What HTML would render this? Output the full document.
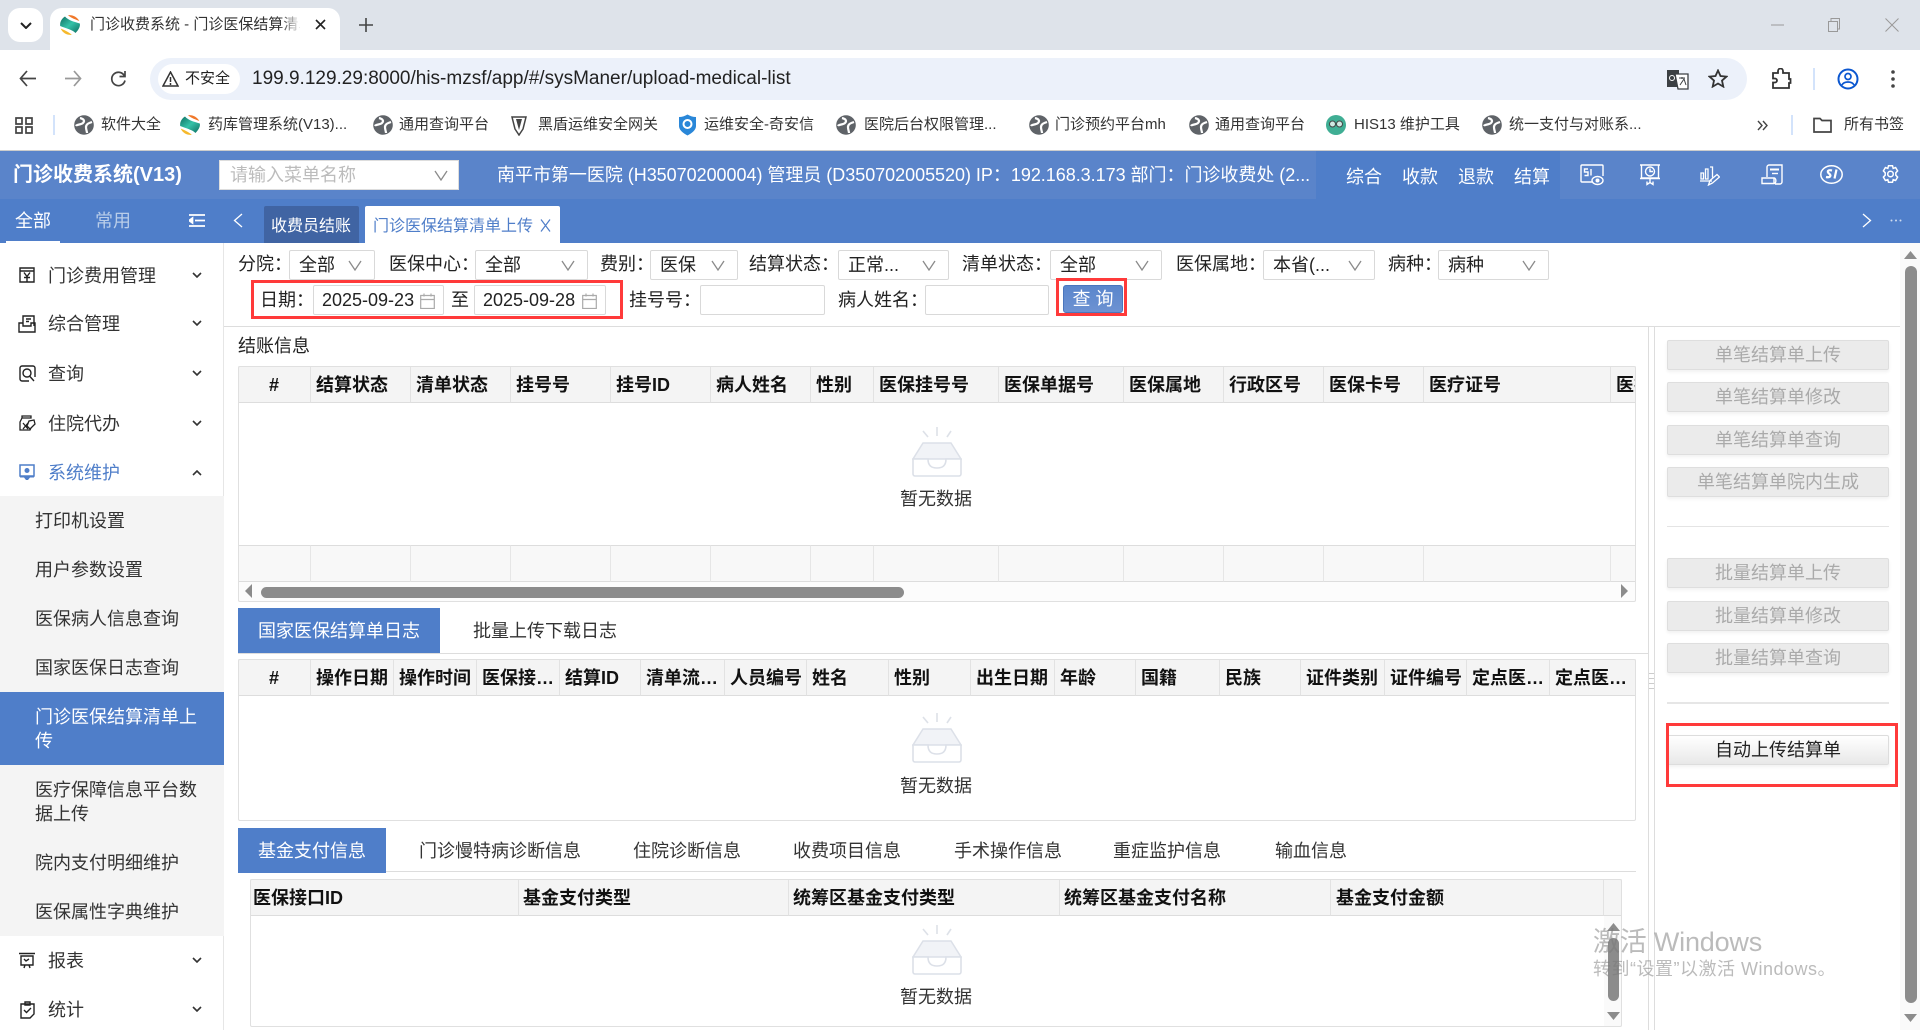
<!DOCTYPE html>
<html lang="zh-CN"><head><meta charset="utf-8"><title>门诊收费系统</title>
<style>
*{box-sizing:border-box}
html,body{margin:0;padding:0;width:1920px;height:1030px;overflow:hidden;background:#fff;font-family:"Liberation Sans","Noto Sans CJK SC",sans-serif;color:#222}
.a{position:absolute}
.t{position:absolute;white-space:nowrap;line-height:24px;height:24px;font-size:18px}
.bm{font-size:15px;color:#333}
.w{color:#fff}
.sel,.inp{position:absolute;height:30px;background:#fff;border:1px solid #d9d9d9;border-radius:2px;font-size:18px;line-height:28px;padding-left:9px;color:#222;white-space:nowrap}
.inp{padding-left:8px}
.sel svg{position:absolute;right:12px;top:9px}
.cal{position:absolute;top:7px}
.tb{position:absolute;overflow:hidden}
.th{position:absolute;top:0;height:37px;background:#f4f4f4;border-right:1px solid #e2e2e2;border-bottom:1px solid #ddd;font-weight:bold;font-size:18px;line-height:39px;padding-left:5px;color:#111;white-space:nowrap;overflow:hidden}
.tf{position:absolute;top:179px;height:37px;background:#f8f8f8;border-right:1px solid #e6e6e6;border-bottom:1px solid #ddd;border-top:1px solid #ddd}
.bd{position:absolute;left:0;top:0;right:0;bottom:0;border:1px solid #e0e0e0;border-radius:2px}
.btn{position:absolute;left:1667px;width:222px;height:30px;background:#ebebeb;border:1px solid #dedede;border-radius:2px;box-shadow:0 2px 3px rgba(0,0,0,.06);font-size:18px;line-height:28px;text-align:center;color:#aaa}
.empty{position:absolute;left:912px}
.et{position:absolute;left:900px;font-size:18px;line-height:24px;color:#333;white-space:nowrap}
.side{position:absolute;left:48px;font-size:18px;line-height:24px;color:#333;white-space:nowrap}
.sub{position:absolute;left:35px;font-size:18px;line-height:24px;color:#333;white-space:nowrap}
</style></head><body>
<svg width="0" height="0" style="position:absolute"><defs>
<linearGradient id="tl" x1="0" y1="0" x2="1" y2="1"><stop offset="0" stop-color="#0f6f62"/><stop offset=".5" stop-color="#35c2a8"/><stop offset="1" stop-color="#0f6f62"/></linearGradient>
<symbol id="emp" viewBox="0 0 50 50"><path d="M25 0v9M11 4l5 6M39 4l-4 6" stroke="#dde1e8" stroke-width="1.6" fill="none"/><path d="M11 16h28l10 16H1z" fill="#f1f3f7" stroke="#dce0e8" stroke-width="1.5"/><path d="M1 32h15c0 8 5 9 9 9s9-1 9-9h15v15a2 2 0 0 1-2 2H3a2 2 0 0 1-2-2z" fill="#fff" stroke="#dce0e8" stroke-width="1.6"/></symbol>
<symbol id="globe" viewBox="0 0 20 20"><circle cx="10" cy="10" r="9.800" fill="#5f6368"/><path d="M6 3c4 1 5 3 3 5s-6 1-7 3M18 7c-3 1-6 2-6 5s1 4 1 6" fill="none" stroke="#fff" stroke-width="2.200"/></symbol>
<symbol id="logo" viewBox="0 0 20 20"><path d="M8 .2C12-.5 17 1.500 19.300 6 16 4.500 12 3.500 8 .2z" fill="#f0782a"/><path d="M.7 13.500C4 15 8 16.500 11.800 19.800 7.500 20.500 2.500 18 .7 13.500z" fill="#f6b92c"/><path d="M5 1.500C8 5 13 6.500 19.800 8.500 20.500 11.500 18.500 15 15.500 18 12 14.500 6 13.500.2 11-.3 7.500 1.500 3.500 5 1.500z" fill="url(#tl)"/></symbol>
<symbol id="chv" viewBox="0 0 14 11"><path d="M1 1l6 9 6-9" fill="none" stroke="#8a8a8a" stroke-width="1.3"/></symbol>
<symbol id="chs" viewBox="0 0 10 6"><path d="M1 1l4 4 4-4" fill="none" stroke="#333" stroke-width="1.6"/></symbol>
<symbol id="calc" viewBox="0 0 15 16"><path d="M.7 2.500h13.600v13H.7zM.7 6.500h13.600M4 .5v3M11 .5v3" fill="none" stroke="#aaa" stroke-width="1.2"/></symbol>
</defs></svg>

<!-- browser tab bar -->
<div class="a" style="left:0;top:0;width:1920px;height:50px;background:#dee3ea"></div>
<div class="a" style="left:8px;top:8px;width:35px;height:34px;background:#fff;border-radius:12px"></div>
<svg class="a" style="left:20px;top:22px" width="12" height="7" viewBox="0 0 12 7"><path d="M1 1l5 5 5-5" fill="none" stroke="#222" stroke-width="2"/></svg>
<div class="a" style="left:50px;top:8px;width:290px;height:42px;background:#fff;border-radius:12px 12px 0 0"></div>
<svg class="a" style="left:60px;top:15px" width="20" height="20"><use href="#logo"/></svg>
<div class="t" style="left:90px;top:13px;font-size:15px;width:210px;overflow:hidden;color:#333">门诊收费系统 - 门诊医保结算清单</div>
<div class="a" style="left:280px;top:13px;width:22px;height:24px;background:linear-gradient(90deg,rgba(255,255,255,0),#fff)"></div>
<svg class="a" style="left:315px;top:19px" width="11" height="11" viewBox="0 0 11 11"><path d="M1 1l9 9M10 1l-9 9" stroke="#222" stroke-width="1.6"/></svg>
<svg class="a" style="left:359px;top:18px" width="14" height="14" viewBox="0 0 14 14"><path d="M7 0v14M0 7h14" stroke="#444" stroke-width="1.6"/></svg>
<svg class="a" style="left:1771px;top:24px" width="13" height="2"><path d="M0 1h13" stroke="#999"/></svg>
<svg class="a" style="left:1827px;top:18px" width="14" height="14" viewBox="0 0 14 14"><path d="M1.500 3.500h9v10h-9zM4 3V.5h8.500V11H11" fill="none" stroke="#999"/></svg>
<svg class="a" style="left:1885px;top:18px" width="14" height="14" viewBox="0 0 14 14"><path d="M.5.5l13 13M13.500.5l-13 13" stroke="#999"/></svg>

<!-- toolbar -->
<div class="a" style="left:0;top:50px;width:1920px;height:101px;background:#fff;border-radius:10px 10px 0 0;border-bottom:1px solid #ccc"></div>
<svg class="a" style="left:19px;top:70px" width="18" height="17" viewBox="0 0 18 17"><path d="M8 1L1.500 8.500 8 16M2 8.500h15" fill="none" stroke="#444" stroke-width="1.700"/></svg>
<svg class="a" style="left:64px;top:70px" width="18" height="17" viewBox="0 0 18 17"><path d="M10 1l6.500 7.500L10 16M16 8.500H1" fill="none" stroke="#999" stroke-width="1.700"/></svg>
<svg class="a" style="left:110px;top:70px" width="17" height="17" viewBox="0 0 17 17"><path d="M14.500 6A6.700 6.700 0 1 0 15 10.500M15 1v5.500H9.500" fill="none" stroke="#444" stroke-width="1.700"/></svg>
<div class="a" style="left:150px;top:58px;width:1597px;height:42px;background:#ecf1fa;border-radius:21px"></div>
<div class="a" style="left:158px;top:64px;width:82px;height:30px;background:#fff;border-radius:15px"></div>
<svg class="a" style="left:162px;top:71px" width="17" height="16" viewBox="0 0 17 16"><path d="M8.500 1L16 15H1zM8.500 6v5M8.500 12v2" fill="none" stroke="#333" stroke-width="1.500"/></svg>
<div class="t" style="left:185px;top:67px;font-size:15px;color:#222">不安全</div>
<div class="t" style="left:252px;top:67px;font-size:19px;color:#222">199.9.129.29:8000/his-mzsf/app/#/sysManer/upload-medical-list</div>
<svg class="a" style="left:1666px;top:69px" width="23" height="21" viewBox="0 0 23 21"><path d="M1 1h12v17H1z" fill="#3c4043"/><path d="M9 5h13v15H12z" fill="#fff" stroke="#3c4043" stroke-width="1.300"/><path d="M13 9h6M16 8v2M14 16l4-6 2 6" fill="none" stroke="#3c4043"/><circle cx="6" cy="9" r="2.500" fill="none" stroke="#fff"/></svg>
<svg class="a" style="left:1708px;top:69px" width="20" height="19" viewBox="0 0 20 19"><path d="M10 1.500l2.500 5.500 6 .6-4.500 4 1.300 6L10 14.500 4.700 17.600l1.300-6-4.500-4 6-.6z" fill="none" stroke="#333" stroke-width="1.800"/></svg>
<svg class="a" style="left:1771px;top:68px" width="21" height="21" viewBox="0 0 21 21"><path d="M2 5h5V3a2.500 2.500 0 0 1 5 0v2h6v6h1.500v4H18v5H2v-5.500h2a2 2 0 0 0 0-4H2z" fill="none" stroke="#333" stroke-width="1.800"/></svg>
<div class="a" style="left:1813px;top:68px;width:2px;height:22px;background:#d3e3fb"></div>
<svg class="a" style="left:1837px;top:68px" width="22" height="22" viewBox="0 0 22 22"><circle cx="11" cy="11" r="9.500" fill="none" stroke="#0b57d0" stroke-width="2"/><circle cx="11" cy="8.500" r="3" fill="none" stroke="#0b57d0" stroke-width="1.700"/><path d="M5 17c2-4 10-4 12 0" fill="none" stroke="#0b57d0" stroke-width="1.700"/></svg>
<svg class="a" style="left:1891px;top:70px" width="4" height="18"><circle cx="2" cy="2" r="1.800" fill="#444"/><circle cx="2" cy="9" r="1.800" fill="#444"/><circle cx="2" cy="16" r="1.800" fill="#444"/></svg>

<!-- bookmarks -->
<svg class="a" style="left:15px;top:117px" width="19" height="17" viewBox="0 0 19 17"><path d="M1 1h6v6H1zM11 1h6v6h-6zM1 10h6v6H1zM11 10h6v6h-6z" fill="none" stroke="#444" stroke-width="1.700"/></svg>
<div class="a" style="left:53px;top:115px;width:2px;height:20px;background:#d3e3fb"></div>
<svg class="a" style="left:74px;top:115px" width="20" height="20"><use href="#globe"/></svg><div class="t bm" style="left:101px;top:113px">软件大全</div>
<svg class="a" style="left:180px;top:115px" width="20" height="20"><use href="#logo"/></svg><div class="t bm" style="left:208px;top:113px">药库管理系统(V13)...</div>
<svg class="a" style="left:373px;top:115px" width="20" height="20"><use href="#globe"/></svg><div class="t bm" style="left:399px;top:113px">通用查询平台</div>
<svg class="a" style="left:511px;top:115px" width="16" height="21" viewBox="0 0 16 21"><path d="M1 2h14l-3 12-4 6-4-6z" fill="none" stroke="#444" stroke-width="1.500"/><path d="M5 4l3 11 3-11z" fill="#444"/></svg><div class="t bm" style="left:538px;top:113px">黑盾运维安全网关</div>
<svg class="a" style="left:678px;top:114px" width="19" height="22" viewBox="0 0 19 22"><path d="M1 3c3 0 6-1 8.500-2.500C12 2 15 3 18 3v9c0 4-4 7-8.500 9.500C5 19 1 16 1 12z" fill="#2a87d8"/><circle cx="9.500" cy="10" r="4" fill="none" stroke="#fff" stroke-width="2"/></svg><div class="t bm" style="left:704px;top:113px">运维安全-奇安信</div>
<svg class="a" style="left:836px;top:115px" width="20" height="20"><use href="#globe"/></svg><div class="t bm" style="left:864px;top:113px">医院后台权限管理...</div>
<svg class="a" style="left:1029px;top:115px" width="20" height="20"><use href="#globe"/></svg><div class="t bm" style="left:1055px;top:113px">门诊预约平台mh</div>
<svg class="a" style="left:1189px;top:115px" width="20" height="20"><use href="#globe"/></svg><div class="t bm" style="left:1215px;top:113px">通用查询平台</div>
<svg class="a" style="left:1326px;top:115px" width="20" height="20" viewBox="0 0 20 20"><circle cx="10" cy="10" r="10" fill="#3fae94"/><circle cx="6.500" cy="9" r="3" fill="#cfe9e2" stroke="#444"/><circle cx="13.500" cy="9" r="3" fill="#cfe9e2" stroke="#444"/></svg><div class="t bm" style="left:1354px;top:113px">HIS13 维护工具</div>
<svg class="a" style="left:1482px;top:115px" width="20" height="20"><use href="#globe"/></svg><div class="t bm" style="left:1509px;top:113px">统一支付与对账系...</div>
<svg class="a" style="left:1757px;top:120px" width="11" height="11" viewBox="0 0 11 11"><path d="M1 1l4 4.500L1 10M6 1l4 4.500L6 10" fill="none" stroke="#444" stroke-width="1.400"/></svg>
<div class="a" style="left:1791px;top:115px;width:2px;height:20px;background:#d3e3fb"></div>
<svg class="a" style="left:1813px;top:117px" width="19" height="16" viewBox="0 0 19 16"><path d="M1 1.500h6l2 2h9v11.500H1z" fill="none" stroke="#444" stroke-width="1.700"/></svg>
<div class="t bm" style="left:1844px;top:113px">所有书签</div>

<!-- app header -->
<div class="a" style="left:0;top:151px;width:1920px;height:48px;background:#5a84ca"></div>
<div class="a" style="left:1316px;top:151px;width:244px;height:48px;background:#4f7ec9"></div>
<div class="a" style="left:0;top:199px;width:1920px;height:44px;background:#4f7ec9"></div>
<div class="t w" style="left:13px;top:163px;font-size:20px;font-weight:bold">门诊收费系统(V13)</div>
<div class="a" style="left:219px;top:160px;width:240px;height:30px;background:#fff;border:1px solid #ddd"></div>
<div class="t" style="left:230px;top:163px;color:#bcbcbc">请输入菜单名称</div>
<svg class="a" style="left:434px;top:170px" width="14" height="11"><use href="#chv"/></svg>
<div class="t w" style="left:497px;top:163px;width:816px;overflow:hidden;font-size:18px;letter-spacing:-.03px">南平市第一医院 (H35070200004) 管理员 (D350702005520) IP：192.168.3.173 部门：门诊收费处 (2...</div>
<div class="t w" style="left:1346px;top:165px">综合</div>
<div class="t w" style="left:1402px;top:165px">收款</div>
<div class="t w" style="left:1458px;top:165px">退款</div>
<div class="t w" style="left:1514px;top:165px">结算</div>
<!-- header icons -->
<svg class="a" style="left:1580px;top:164px" width="26" height="22" viewBox="0 0 26 22" fill="none" stroke="#fff" stroke-width="1.400"><path d="M12 18H2a1 1 0 0 1-1-1V2a1 1 0 0 1 1-1h20a1 1 0 0 1 1 1v10"/><path d="M8 5H4.500v3H8v3.500H4.500M11 5v6.500"/><ellipse cx="17.500" cy="16.500" rx="5.500" ry="4"/><circle cx="17.500" cy="16.500" r="1.300" fill="#fff"/></svg>
<svg class="a" style="left:1640px;top:164px" width="20" height="22" viewBox="0 0 20 22" fill="none" stroke="#fff" stroke-width="1.400"><path d="M0 1h20M1.500 1v13h17V1M0 14.500h20M10 15v3M7 17.500v3l3-2 3 2v-3"/><circle cx="10" cy="7.500" r="4.500"/><path d="M10 4.500v3h3"/></svg>
<svg class="a" style="left:1700px;top:166px" width="20" height="20" viewBox="0 0 20 20" fill="none" stroke="#fff" stroke-width="1.300"><path d="M1 7h2.500v6H1zM5.500 3h2.500v10H5.500zM10 1h2.500v10.500M0 15h12M8.500 19l1.500-4.500 7-6 2.500 2.500-7 6z"/></svg>
<svg class="a" style="left:1761px;top:164px" width="22" height="21" viewBox="0 0 22 21" fill="none" stroke="#fff" stroke-width="1.400"><path d="M6 13V3c0-1 1-2 2-2h13v17c0 1-1 2-2 2h-5M1 14h12v5.500H1zM13 19.500c2.500 0 2.500-5.500 0-5.500"/><path d="M9 5.500h9" stroke-width="2"/><path d="M11 9.500h6"/></svg>
<svg class="a" style="left:1820px;top:165px" width="23" height="19" viewBox="0 0 23 19" fill="none" stroke="#fff"><ellipse cx="11.500" cy="9.500" rx="10.700" ry="8.700" stroke-width="1.500"/><path d="M12 5.500c-4-1-5.500 1-3 3s1.500 4.500-3 3.500M16.500 4.500l-2 9" stroke-width="2.200"/></svg>
<svg class="a" style="left:1881px;top:165px" width="19" height="18" viewBox="0 0 19 18" fill="none" stroke="#fff" stroke-width="1.500"><path d="M7.500.8h4l.7 2.600 2.400-.9 2 3.400-1.800 1.900v2.400l1.800 1.900-2 3.400-2.400-.9-.7 2.600h-4l-.7-2.600-2.400.9-2-3.400 1.800-1.900V7.800L2.400 5.900l2-3.400 2.400.9z"/><circle cx="9.500" cy="9" r="2.800"/></svg>

<div class="t w" style="left:15px;top:209px">全部</div>
<div class="t" style="left:95px;top:209px;color:#b9cde9">常用</div>
<div class="a" style="left:6px;top:241px;width:54px;height:2px;background:#fff"></div>
<svg class="a" style="left:189px;top:214px" width="16" height="13" viewBox="0 0 16 13"><path d="M0 1h16M6 6.500h10M0 12h16M0 6.500l3.500-2.500v5z" stroke="#fff" stroke-width="1.700" fill="#fff"/></svg>
<svg class="a" style="left:233px;top:213px" width="10" height="15" viewBox="0 0 10 15"><path d="M9 1L1.500 7.500 9 14" fill="none" stroke="#fff" stroke-width="1.300"/></svg>
<div class="a" style="left:264px;top:206px;width:95px;height:37px;background:#4064a3;border-radius:2px 2px 0 0"></div>
<div class="t w" style="left:271px;top:215px;font-size:16px">收费员结账</div>
<div class="a" style="left:365px;top:206px;width:195px;height:37px;background:#fff;border-radius:2px 2px 0 0"></div>
<div class="t" style="left:373px;top:215px;font-size:16px;color:#4f7ec9">门诊医保结算清单上传</div>
<svg class="a" style="left:540px;top:219px" width="11" height="13" viewBox="0 0 11 13"><path d="M1 .5l9 12M10 .5l-9 12" stroke="#4f7ec9" stroke-width="1.200"/></svg>
<svg class="a" style="left:1862px;top:213px" width="10" height="15" viewBox="0 0 10 15"><path d="M1 1l7.500 6.500L1 14" fill="none" stroke="#fff" stroke-width="1.300"/></svg>
<svg class="a" style="left:1890px;top:219px" width="12" height="3"><circle cx="1.500" cy="1.500" r="1" fill="#cfdcf0"/><circle cx="6" cy="1.500" r="1" fill="#cfdcf0"/><circle cx="10.500" cy="1.500" r="1" fill="#cfdcf0"/></svg>

<!-- sidebar -->
<div class="a" style="left:0;top:243px;width:224px;height:787px;background:#fff;border-right:1px solid #e6e6e6"></div>
<div class="a" style="left:0;top:496px;width:224px;height:440px;background:#f4f4f4"></div>
<div class="a" style="left:0;top:692px;width:224px;height:73px;background:#4f7ec9"></div>

<svg class="a" style="left:19px;top:267px" width="16" height="16" viewBox="0 0 16 16" fill="none" stroke="#222" stroke-width="1.400"><path d="M1 1h14v14H1zM1 4h14M5 5.500l3 4 3-4M8 9.500v5M5 10.500h6"/></svg>
<div class="side" style="top:264px">门诊费用管理</div>
<svg class="a" style="left:192px;top:272px" width="10" height="6"><use href="#chs"/></svg>
<svg class="a" style="left:18px;top:315px" width="18" height="18" viewBox="0 0 18 18" fill="none" stroke="#222" stroke-width="1.400"><path d="M5 9V1h11v10M1 8h4v3h8V8h4v9H1zM8 4h5M8 6.500h3"/></svg>
<div class="side" style="top:312px">综合管理</div>
<svg class="a" style="left:192px;top:320px" width="10" height="6"><use href="#chs"/></svg>
<svg class="a" style="left:19px;top:365px" width="17" height="17" viewBox="0 0 17 17" fill="none" stroke="#222" stroke-width="1.400"><path d="M10 16H3a2 2 0 0 1-2-2V3a2 2 0 0 1 2-2h11a2 2 0 0 1 2 2v9"/><circle cx="8" cy="8" r="4"/><path d="M10.500 11l4.500 5"/></svg>
<div class="side" style="top:362px">查询</div>
<svg class="a" style="left:192px;top:370px" width="10" height="6"><use href="#chs"/></svg>
<svg class="a" style="left:19px;top:415px" width="17" height="16" viewBox="0 0 17 16" fill="none" stroke="#222" stroke-width="1.300"><path d="M3 1h9v2H3zM3 3L1 7v8h10l1-2M10 6l5-1 1 4-5 5-3-3zM4 8l5 6M9 8l-5 6"/></svg>
<div class="side" style="top:412px">住院代办</div>
<svg class="a" style="left:192px;top:420px" width="10" height="6"><use href="#chs"/></svg>
<svg class="a" style="left:19px;top:464px" width="16" height="17" viewBox="0 0 16 17"><path d="M1 1h14v11H1z" fill="none" stroke="#4f7ec9" stroke-width="1.500"/><circle cx="8" cy="6.500" r="2.500" fill="#4f7ec9"/><path d="M1 12h14v1.500H1zM5 13.500h6L9 16H7z" fill="#4f7ec9"/></svg>
<div class="side" style="top:461px;color:#4f7ec9">系统维护</div>
<svg class="a" style="left:192px;top:470px;transform:rotate(180deg)" width="10" height="6"><use href="#chs"/></svg>
<div class="sub" style="top:509px">打印机设置</div>
<div class="sub" style="top:558px">用户参数设置</div>
<div class="sub" style="top:607px">医保病人信息查询</div>
<div class="sub" style="top:656px">国家医保日志查询</div>
<div class="sub" style="top:705px;color:#fff">门诊医保结算清单上</div>
<div class="sub" style="top:729px;color:#fff">传</div>
<div class="sub" style="top:778px">医疗保障信息平台数</div>
<div class="sub" style="top:802px">据上传</div>
<div class="sub" style="top:851px">院内支付明细维护</div>
<div class="sub" style="top:900px">医保属性字典维护</div>
<svg class="a" style="left:19px;top:952px" width="16" height="17" viewBox="0 0 16 17" fill="none" stroke="#222" stroke-width="1.400"><path d="M0 1.500h16M2 4h12v9H2zM5 16l1-3M11 16l-1-3M5 7l2 2 3-2"/></svg>
<div class="side" style="top:949px">报表</div>
<svg class="a" style="left:192px;top:957px" width="10" height="6"><use href="#chs"/></svg>
<svg class="a" style="left:20px;top:1001px" width="15" height="18" viewBox="0 0 15 18" fill="none" stroke="#222" stroke-width="1.400"><path d="M1 3h13v10l-4 4H1zM5 1h5v3H5zM4 9l2.500 2.500L11 7"/></svg>
<div class="side" style="top:998px">统计</div>
<svg class="a" style="left:192px;top:1006px" width="10" height="6"><use href="#chs"/></svg>

<!-- filters row 1 -->
<div class="t" style="left:238px;top:252px">分院：</div>
<div class="sel" style="left:289px;top:250px;width:86px">全部<svg width="14" height="11"><use href="#chv"/></svg></div>
<div class="t" style="left:389px;top:252px">医保中心：</div>
<div class="sel" style="left:475px;top:250px;width:113px">全部<svg width="14" height="11"><use href="#chv"/></svg></div>
<div class="t" style="left:600px;top:252px">费别：</div>
<div class="sel" style="left:650px;top:250px;width:88px">医保<svg width="14" height="11"><use href="#chv"/></svg></div>
<div class="t" style="left:749px;top:252px">结算状态：</div>
<div class="sel" style="left:838px;top:250px;width:111px">正常...<svg width="14" height="11"><use href="#chv"/></svg></div>
<div class="t" style="left:962px;top:252px">清单状态：</div>
<div class="sel" style="left:1050px;top:250px;width:112px">全部<svg width="14" height="11"><use href="#chv"/></svg></div>
<div class="t" style="left:1176px;top:252px">医保属地：</div>
<div class="sel" style="left:1263px;top:250px;width:112px">本省(...<svg width="14" height="11"><use href="#chv"/></svg></div>
<div class="t" style="left:1388px;top:252px">病种：</div>
<div class="sel" style="left:1438px;top:250px;width:111px">病种<svg width="14" height="11"><use href="#chv"/></svg></div>

<!-- filters row 2 -->
<div class="a" style="left:251px;top:280px;width:372px;height:39px;border:3px solid #ff3a3a"></div>
<div class="t" style="left:260px;top:288px">日期：</div>
<div class="inp" style="left:313px;top:285px;width:131px">2025-09-23<svg class="cal" style="left:106px" width="15" height="16"><use href="#calc"/></svg></div>
<div class="t" style="left:451px;top:288px">至</div>
<div class="inp" style="left:474px;top:285px;width:132px">2025-09-28<svg class="cal" style="left:107px" width="15" height="16"><use href="#calc"/></svg></div>
<div class="t" style="left:629px;top:288px">挂号号：</div>
<div class="inp" style="left:700px;top:285px;width:125px"></div>
<div class="t" style="left:838px;top:288px">病人姓名：</div>
<div class="inp" style="left:925px;top:285px;width:124px"></div>
<div class="a" style="left:1056px;top:278px;width:71px;height:38px;border:3px solid #ff3a3a"></div>
<div class="a" style="left:1063px;top:285px;width:60px;height:28px;background:linear-gradient(#5a86cc,#6d92d2);border:1px solid #4a76bd;border-radius:3px;color:#fff;font-size:18px;line-height:26px;text-align:center">查 询</div>
<div class="a" style="left:224px;top:326px;width:1676px;height:1px;background:#ddd"></div>

<!-- section 1 -->
<div class="t" style="left:238px;top:334px">结账信息</div>
<div class="tb" style="left:238px;top:366px;width:1398px;height:236px;background:#fff">
<div class="th" style="left:0;width:73px;text-align:center;padding:0">#</div>
<div class="th" style="left:73px;width:100px">结算状态</div>
<div class="th" style="left:173px;width:100px">清单状态</div>
<div class="th" style="left:273px;width:100px">挂号号</div>
<div class="th" style="left:373px;width:100px">挂号ID</div>
<div class="th" style="left:473px;width:100px">病人姓名</div>
<div class="th" style="left:573px;width:63px">性别</div>
<div class="th" style="left:636px;width:125px">医保挂号号</div>
<div class="th" style="left:761px;width:125px">医保单据号</div>
<div class="th" style="left:886px;width:100px">医保属地</div>
<div class="th" style="left:986px;width:100px">行政区号</div>
<div class="th" style="left:1086px;width:100px">医保卡号</div>
<div class="th" style="left:1186px;width:187px">医疗证号</div>
<div class="th" style="left:1373px;width:25px;border-right:0">医疗</div>
<div class="tf" style="left:0;width:73px"></div><div class="tf" style="left:73px;width:100px"></div><div class="tf" style="left:173px;width:100px"></div><div class="tf" style="left:273px;width:100px"></div><div class="tf" style="left:373px;width:100px"></div><div class="tf" style="left:473px;width:100px"></div><div class="tf" style="left:573px;width:63px"></div><div class="tf" style="left:636px;width:125px"></div><div class="tf" style="left:761px;width:125px"></div><div class="tf" style="left:886px;width:100px"></div><div class="tf" style="left:986px;width:100px"></div><div class="tf" style="left:1086px;width:100px"></div><div class="tf" style="left:1186px;width:187px"></div><div class="tf" style="left:1373px;width:25px;border-right:0"></div>
<div class="a" style="left:0;top:216px;width:1398px;height:20px;background:#fcfcfc"></div>
<div class="a" style="left:23px;top:221px;width:643px;height:11px;background:#8c8c8c;border-radius:6px"></div>
<svg class="a" style="left:7px;top:218px" width="8" height="14"><path d="M7 0v14L0 7z" fill="#8c8c8c"/></svg>
<svg class="a" style="left:1383px;top:218px" width="8" height="14"><path d="M0 0v14l7-7z" fill="#8c8c8c"/></svg>
<div class="bd"></div>
</div>
<svg class="empty" style="top:427px" width="50" height="50"><use href="#emp"/></svg>
<div class="et" style="top:487px">暂无数据</div>

<!-- tabs 2 -->
<div class="a" style="left:238px;top:653px;width:1410px;height:1px;background:#ddd"></div>
<div class="a" style="left:238px;top:608px;width:202px;height:45px;background:#4f7ec9"></div>
<div class="t w" style="left:258px;top:619px">国家医保结算单日志</div>
<div class="t" style="left:473px;top:619px;color:#333">批量上传下载日志</div>

<!-- table 2 -->
<div class="tb" style="left:238px;top:659px;width:1398px;height:162px;background:#fff">
<div class="th" style="left:0;width:73px;text-align:center;padding:0">#</div>
<div class="th" style="left:73px;width:83px">操作日期</div>
<div class="th" style="left:156px;width:83px">操作时间</div>
<div class="th" style="left:239px;width:83px">医保接…</div>
<div class="th" style="left:322px;width:81px">结算ID</div>
<div class="th" style="left:403px;width:84px">清单流…</div>
<div class="th" style="left:487px;width:82px">人员编号</div>
<div class="th" style="left:569px;width:82px">姓名</div>
<div class="th" style="left:651px;width:82px">性别</div>
<div class="th" style="left:733px;width:84px">出生日期</div>
<div class="th" style="left:817px;width:81px">年龄</div>
<div class="th" style="left:898px;width:84px">国籍</div>
<div class="th" style="left:982px;width:81px">民族</div>
<div class="th" style="left:1063px;width:84px">证件类别</div>
<div class="th" style="left:1147px;width:82px">证件编号</div>
<div class="th" style="left:1229px;width:83px">定点医…</div>
<div class="th" style="left:1312px;width:86px;border-right:0">定点医…</div>
<div class="bd"></div>
</div>
<svg class="empty" style="top:713px" width="50" height="50"><use href="#emp"/></svg>
<div class="et" style="top:774px">暂无数据</div>

<!-- tabs 3 -->
<div class="a" style="left:238px;top:871px;width:1398px;height:1px;background:#ddd"></div>
<div class="a" style="left:238px;top:828px;width:148px;height:45px;background:#4f7ec9"></div>
<div class="t w" style="left:258px;top:839px">基金支付信息</div>
<div class="t" style="left:419px;top:839px;color:#333">门诊慢特病诊断信息</div>
<div class="t" style="left:633px;top:839px;color:#333">住院诊断信息</div>
<div class="t" style="left:793px;top:839px;color:#333">收费项目信息</div>
<div class="t" style="left:954px;top:839px;color:#333">手术操作信息</div>
<div class="t" style="left:1113px;top:839px;color:#333">重症监护信息</div>
<div class="t" style="left:1275px;top:839px;color:#333">输血信息</div>

<!-- table 3 -->
<div class="tb" style="left:250px;top:879px;width:1372px;height:148px;background:#fff">
<div class="th" style="left:0;width:269px;padding-left:3px">医保接口ID</div>
<div class="th" style="left:269px;width:270px;padding-left:4px">基金支付类型</div>
<div class="th" style="left:539px;width:271px;padding-left:4px">统筹区基金支付类型</div>
<div class="th" style="left:810px;width:271px;padding-left:4px">统筹区基金支付名称</div>
<div class="th" style="left:1081px;width:273px;padding-left:5px">基金支付金额</div>
<div class="th" style="left:1354px;width:18px;border-right:0"></div>
<div class="a" style="left:1354px;top:37px;width:18px;height:111px;background:#fafafa"></div>
<svg class="a" style="left:1357px;top:44px" width="13" height="8"><path d="M6.500 0L13 8H0z" fill="#8c8c8c"/></svg>
<div class="a" style="left:1358px;top:59px;width:11px;height:63px;background:#8c8c8c;border-radius:6px"></div>
<svg class="a" style="left:1357px;top:133px" width="13" height="8"><path d="M0 0h13L6.500 8z" fill="#8c8c8c"/></svg>
<div class="bd"></div>
</div>
<svg class="empty" style="top:925px" width="50" height="50"><use href="#emp"/></svg>
<div class="et" style="top:985px">暂无数据</div>

<!-- splitter -->
<div class="a" style="left:1648px;top:327px;width:7px;height:703px;border-left:1px solid #ddd;border-right:1px solid #ddd;background:#fff"></div>
<div class="a" style="left:1649px;top:673px;width:5px;height:17px;background:repeating-linear-gradient(#ccc 0 1px,#fff 1px 5px)"></div>

<!-- right panel -->
<div class="btn" style="top:340px">单笔结算单上传</div>
<div class="btn" style="top:382px">单笔结算单修改</div>
<div class="btn" style="top:425px">单笔结算单查询</div>
<div class="btn" style="top:467px">单笔结算单院内生成</div>
<div class="a" style="left:1667px;top:526px;width:222px;height:1px;background:#e4e4e4"></div>
<div class="btn" style="top:558px;line-height:29px">批量结算单上传</div>
<div class="btn" style="top:601px">批量结算单修改</div>
<div class="btn" style="top:643px;line-height:29px">批量结算单查询</div>
<div class="a" style="left:1667px;top:702px;width:222px;height:2px;background:#e6e6e6"></div>
<div class="btn" style="top:735px;background:linear-gradient(#fff,#e8e8e8);color:#222;border-color:#ddd">自动上传结算单</div>
<div class="a" style="left:1666px;top:723px;width:232px;height:64px;border:3px solid #ff3a3a"></div>

<!-- page scrollbar -->
<div class="a" style="left:1900px;top:243px;width:20px;height:787px;background:#fafafa"></div>
<svg class="a" style="left:1904px;top:251px" width="13" height="8"><path d="M6.500 0L13 8H0z" fill="#8c8c8c"/></svg>
<div class="a" style="left:1905px;top:266px;width:12px;height:737px;background:#8c8c8c;border-radius:6px"></div>
<svg class="a" style="left:1904px;top:1014px" width="13" height="8"><path d="M0 0h13L6.500 8z" fill="#8c8c8c"/></svg>

<!-- watermark -->
<div class="a" style="left:1593px;top:926px;font-size:27px;line-height:32px;color:rgba(120,120,120,.5);white-space:nowrap;letter-spacing:-.2px">激活 Windows</div>
<div class="a" style="left:1593px;top:957px;font-size:18px;line-height:24px;color:rgba(120,120,120,.5);white-space:nowrap;letter-spacing:.5px">转到“设置”以激活 Windows。</div>
</body></html>
